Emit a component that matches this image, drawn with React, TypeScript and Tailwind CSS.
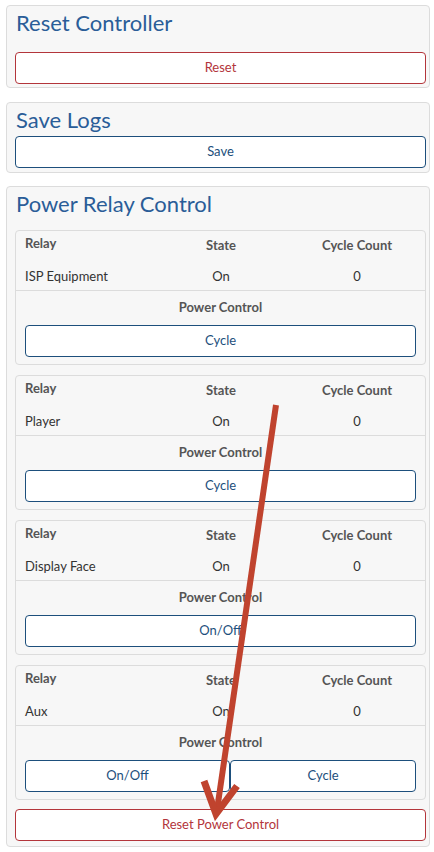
import React from "react";

const font = { fontFamily: "Lato, 'DejaVu Sans', sans-serif" };

function Btn({ label, color, className = "" }: { label: string; color: "red" | "blue"; className?: string }) {
  const cls =
    color === "red"
      ? "border-[#b3353b] text-[#b3353b]"
      : "border-[#1d4f7c] text-[#1d4f7c]";
  return (
    <button
      className={`h-[32px] bg-white border rounded-[4px] text-[13px] flex items-center justify-center ${cls} ${className}`}
    >
      {label}
    </button>
  );
}

function Relay({ name, buttons }: { name: string; buttons: string[] }) {
  return (
    <div className="border border-[#dcdcdc] rounded-[4px] bg-[#f7f7f7] flex flex-col">
      <div className="grid grid-cols-[119px_154px_1fr] px-[9px] h-[28px] text-[13px] font-bold text-[#555]">
        <div className="pt-[4px] leading-[16px]">Relay</div>
        <div className="pt-[6px] leading-[16px] text-center">State</div>
        <div className="pt-[6px] leading-[16px] text-center">Cycle Count</div>
      </div>
      <div className="grid grid-cols-[119px_154px_1fr] px-[9px] h-[32px] border-b border-[#dcdcdc] text-[13px] text-[#333]">
        <div className="pt-[9px] leading-[16px]">{name}</div>
        <div className="pt-[9px] leading-[16px] text-center">On</div>
        <div className="pt-[9px] leading-[16px] text-center">0</div>
      </div>
      <div className="pt-[8px] leading-[16px] text-center text-[13px] font-bold text-[#555]">Power Control</div>
      <div className="flex px-[9px] mt-[10px] mb-[7px]">
        {buttons.length > 1 ? (
          <>
            <Btn label={buttons[0]} color="blue" className="w-[205px] shrink-0" />
            <Btn label={buttons[1]} color="blue" className="flex-1" />
          </>
        ) : (
          <Btn label={buttons[0]} color="blue" className="flex-1" />
        )}
      </div>
    </div>
  );
}

function Title({ children }: { children: React.ReactNode }) {
  return <div className="h-[28px] leading-[28px] text-[22px] text-[#2a5d98] pl-[1px]">{children}</div>;
}

export default function App() {
  return (
    <div className="relative bg-white w-[434px] min-h-[852px] pt-[5px] pl-[6px] pr-[4px]" style={font}>
      <div className="flex flex-col">
        <div className="border border-[#dcdcdc] rounded-[4px] bg-[#f7f7f7] pt-[3px] pl-[8px] pr-[3px] pb-[3px] flex flex-col">
          <Title>Reset Controller</Title>
          <Btn label="Reset" color="red" className="mt-[15px] w-full" />
        </div>
        <div className="mt-[14px] border border-[#dcdcdc] rounded-[4px] bg-[#f7f7f7] pt-[3px] pl-[8px] pr-[3px] pb-[4px] flex flex-col">
          <Title>Save Logs</Title>
          <Btn label="Save" color="blue" className="mt-[2px] w-full" />
        </div>
        <div className="mt-[13px] border border-[#dcdcdc] rounded-[4px] bg-[#f7f7f7] pt-[3px] pl-[8px] pr-[3px] pb-[5px] flex flex-col">
          <Title>Power Relay Control</Title>
          <div className="mt-[12px] flex flex-col gap-[10px]">
            <Relay name="ISP Equipment" buttons={["Cycle"]} />
            <Relay name="Player" buttons={["Cycle"]} />
            <Relay name="Display Face" buttons={["On/Off"]} />
            <Relay name="Aux" buttons={["On/Off", "Cycle"]} />
          </div>
          <Btn label="Reset Power Control" color="red" className="mt-[9px] w-full" />
        </div>
      </div>
      <svg className="absolute left-0 top-0 pointer-events-none" width="434" height="852" viewBox="0 0 434 852">
        <g stroke="#c0432e" strokeWidth="6" fill="none" strokeLinecap="butt" strokeLinejoin="miter">
          <line x1="276" y1="405" x2="217" y2="810" />
          <polyline points="204,781 216,814 237,786" strokeWidth="7" />
        </g>
      </svg>
    </div>
  );
}
